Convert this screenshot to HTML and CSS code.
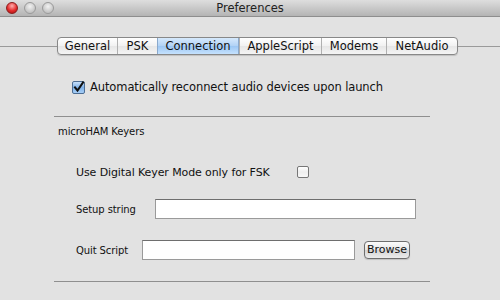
FILE: index.html
```html
<!DOCTYPE html>
<html>
<head>
<meta charset="utf-8">
<link rel="stylesheet" href="styles.css">
</head>
<body>
<div class="window">
  <div class="titlebar">
    <div class="lights">
      <span class="light red"></span>
      <span class="light"></span>
      <span class="light"></span>
    </div>
    <div class="title">Preferences</div>
  </div>
  <div class="tabrow">
    <div class="rule rule-left"></div>
    <div class="tabs">
      <div class="tab t-general">General</div>
      <div class="tab t-psk">PSK</div>
      <div class="tab t-conn active">Connection</div>
      <div class="tab t-apple">AppleScript</div>
      <div class="tab t-modems">Modems</div>
      <div class="tab t-net">NetAudio</div>
    </div>
    <div class="rule"></div>
  </div>
  <div class="panel">
    <div class="check-row">
      <svg class="cb" width="13" height="13" viewBox="0 0 13 13">
        <defs>
          <linearGradient id="cbg" x1="0" y1="0" x2="0" y2="1">
            <stop offset="0" stop-color="#cfe4fb"/>
            <stop offset="0.5" stop-color="#7fb2ea"/>
            <stop offset="1" stop-color="#a9d0f7"/>
          </linearGradient>
        </defs>
        <rect x="0.5" y="0.5" width="12" height="12" rx="1.5" fill="url(#cbg)" stroke="#4d6d93"/>
        <path d="M3 6.5 L5.5 9.5 L11 1.5" fill="none" stroke="#111" stroke-width="2" stroke-linecap="square"/>
      </svg>
      <span class="label-auto">Automatically reconnect audio devices upon launch</span>
    </div>
    <div class="sep"></div>
    <div class="section-title">microHAM Keyers</div>
    <div class="keyer-row">
      <span class="label-keyer">Use Digital Keyer Mode only for FSK</span>
      <span class="cb-empty"></span>
    </div>
    <div class="field-row setup">
      <span class="label-sm">Setup string</span>
      <span class="input input-setup"></span>
    </div>
    <div class="field-row quit">
      <span class="label-sm">Quit Script</span>
      <span class="input input-quit"></span>
      <span class="button">Browse</span>
    </div>
    <div class="sep sep-bottom"></div>
  </div>
</div>
</body>
</html>
```
FILE: styles.css
```css
html, body {
  margin: 0;
  padding: 0;
}
body {
  width: 500px;
  height: 300px;
  overflow: hidden;
  background: #e2e2e2;
  font-family: "DejaVu Sans", "Liberation Sans", sans-serif;
  color: #111;
}
.window {
  width: 500px;
  height: 300px;
  display: flex;
  flex-direction: column;
}
.titlebar {
  height: 16px;
  display: flex;
  align-items: center;
  position: relative;
  background: linear-gradient(#dedede, #b4b4b4);
  border-bottom: 1px solid #8e8e8e;
}
.lights {
  display: flex;
  gap: 6px;
  padding-left: 6px;
}
.light {
  width: 12px;
  height: 12px;
  border-radius: 50%;
  box-sizing: border-box;
  border: 1px solid #9a9a9a;
  background: radial-gradient(circle at 50% 35%, #f2f2f2, #c4c4c4 70%);
}
.light.red {
  border-color: #8a1d1d;
  background: radial-gradient(circle at 50% 30%, #ffb0b0, #e52d2d 55%, #a51010);
}
.title {
  position: absolute;
  left: 0;
  right: 0;
  text-align: center;
  font-size: 11.5px;
  line-height: 16px;
  color: #222;
}
.tabrow {
  margin-top: 20px;
  display: flex;
  align-items: center;
  height: 18px;
}
.rule {
  flex: 1;
  height: 1px;
  background: #9a9a9a;
}
.rule-left {
  flex: 0 0 57px;
}
.tabs {
  display: flex;
  height: 18px;
  box-sizing: border-box;
  border: 1px solid #888;
  border-radius: 4px;
  background: linear-gradient(#ffffff, #f1f1f1 50%, #e6e6e6 51%, #f4f4f4);
  overflow: hidden;
  box-shadow: 0 1px 1px rgba(0,0,0,0.15);
}
.tab {
  font-size: 11.5px;
  line-height: 16px;
  text-align: center;
  border-left: 1px solid #b0b0b0;
  box-sizing: border-box;
}
.tab:first-child { border-left: none; }
.t-general { width: 59px; }
.t-psk { width: 40px; }
.t-conn { width: 82px; }
.t-apple { width: 82px; }
.t-modems { width: 65px; }
.t-net { width: 71px; }
.tab.active {
  background: linear-gradient(#d6e9fc, #b1d2f5 50%, #9cc6f3 51%, #c5e2fe);
  border-right: 1px solid #8aa9cc;
  border-left-color: #8aa9cc;
}
.panel {
  padding-left: 54px;
  width: 376px;
  display: flex;
  flex-direction: column;
}
.check-row {
  margin-top: 25px;
  padding-left: 18px;
  display: flex;
  align-items: center;
  gap: 5px;
  height: 14px;
}
.cb { display: block; }
.label-auto {
  font-size: 11.5px;
  letter-spacing: -0.1px;
}
.label-keyer {
  font-size: 11px;
  letter-spacing: -0.1px;
}
.label-sm {
  font-size: 10px;
  letter-spacing: -0.1px;
}
.sep {
  height: 1px;
  background: #8f8f8f;
  margin-top: 22px;
}
.section-title {
  margin-top: 8px;
  padding-left: 4px;
  font-size: 10px;
  letter-spacing: -0.1px;
  line-height: 14px;
}
.keyer-row {
  margin-top: 26px;
  padding-left: 22px;
  display: flex;
  align-items: center;
  height: 14px;
}
.cb-empty {
  margin-left: 27px;
  width: 12px;
  height: 12px;
  box-sizing: border-box;
  border: 1px solid #777;
  border-radius: 2px;
  background: linear-gradient(#ffffff, #eeeeee 50%, #f8f8f8);
}
.field-row {
  display: flex;
  align-items: center;
  padding-left: 22px;
}
.setup { margin-top: 20px; }
.quit { margin-top: 21px; }
.input {
  display: block;
  height: 20px;
  box-sizing: border-box;
  background: #fff;
  border: 1px solid #9a9a9a;
  border-top-color: #6e6e6e;
}
.input-setup {
  margin-left: 19px;
  width: 261px;
}
.input-quit {
  margin-left: 14px;
  width: 213px;
}
.button {
  margin-left: 9px;
  height: 18px;
  width: 46px;
  box-sizing: border-box;
  border: 1px solid #6e6e6e;
  border-radius: 4px;
  background: linear-gradient(#fbfbfb, #e6e6e6 50%, #d4d4d4 51%, #ececec);
  font-size: 11px;
  line-height: 16px;
  text-align: center;
  box-shadow: 0 1px 1px rgba(0,0,0,0.15);
}
.sep-bottom {
  margin-top: 21px;
}
```
